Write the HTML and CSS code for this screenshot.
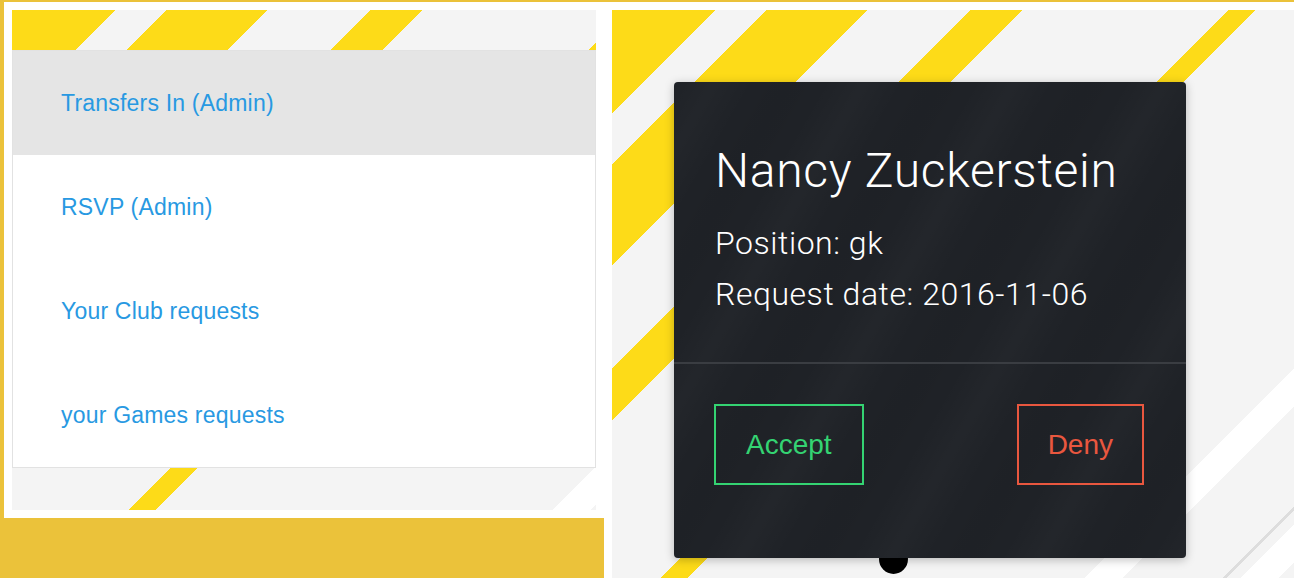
FILE: index.html
```html
<!DOCTYPE html>
<html lang="en">
<head>
<meta charset="utf-8">
<title>Requests</title>
<link rel="stylesheet" href="styles.css">
</head>
<body>
<div class="page">
  <div class="left-frame">
    <div class="stripes left-panel">
      <ul class="menu">
        <li class="menu-item active"><a href="#">Transfers In (Admin)</a></li>
        <li class="menu-item"><a href="#">RSVP (Admin)</a></li>
        <li class="menu-item"><a href="#">Your Club requests</a></li>
        <li class="menu-item"><a href="#">your Games requests</a></li>
      </ul>
    </div>
  </div>
  <div class="right-frame">
    <div class="stripes right-panel">
      <div class="blob"></div>
      <div class="card">
        <div class="card-body">
          <h2 class="name">Nancy Zuckerstein</h2>
          <p class="meta">Position: gk</p>
          <p class="meta">Request date: 2016-11-06</p>
        </div>
        <div class="card-actions">
          <button class="btn btn-accept">Accept</button>
          <button class="btn btn-deny">Deny</button>
        </div>
      </div>
    </div>
  </div>
</div>
</body>
</html>
```
FILE: styles.css
```css
html, body {
  margin: 0;
  padding: 0;
  height: 578px;
  overflow: hidden;
}
body {
  background: #ebc23a;
  font-family: "Liberation Sans", Arial, sans-serif;
}
.page {
  display: flex;
  align-items: flex-start;
  height: 578px;
  box-sizing: border-box;
  padding: 2px 0 0 4px;
}
.left-frame {
  width: 600px;
  height: 516px;
  box-sizing: border-box;
  padding: 8px;
  background: #fff;
}
.right-frame {
  flex: 1;
  align-self: stretch;
  background: #fff;
  padding: 8px 0 0 8px;
}
.stripes {
  background-color: #f4f4f4;
  background-image: linear-gradient(135deg,
    #fddb18 0px, #fddb18 73.5px,
    #f4f4f4 73.5px, #f4f4f4 109.6px,
    #fddb18 109.6px, #fddb18 181px,
    #f4f4f4 181px, #f4f4f4 253.8px,
    #fddb18 253.8px, #fddb18 290.6px,
    #f4f4f4 290.6px, #f4f4f4 435.6px,
    #fddb18 435.6px, #fddb18 454.7px,
    #f4f4f4 454.7px, #f4f4f4 735.4px,
    #ffffff 735.4px, #ffffff 762.3px,
    #f4f4f4 762.3px, #f4f4f4 833px,
    #dddddd 833px, #dddddd 836.5px,
    #f4f4f4 836.5px, #f4f4f4 846px,
    #ffffff 846px, #ffffff 873px,
    #f4f4f4 873px);
  background-size: 1300px 1300px;
  background-repeat: no-repeat;
}
.left-panel {
  height: 500px;
  box-sizing: border-box;
  padding-top: 40px;
}
.menu {
  list-style: none;
  margin: 0;
  padding: 0;
  background: #fff;
  border: 1px solid #e2e2e2;
}
.menu-item {
  padding: 40px 48px;
  line-height: 24px;
  font-size: 23px;
  letter-spacing: 0.2px;
}
.menu-item.active {
  background: #e5e5e5;
}
.menu-item a {
  color: #2899e2;
  text-decoration: none;
}
.right-panel {
  position: relative;
  height: 100%;
  box-sizing: border-box;
  padding: 72px 0 0 62px;
}
.blob {
  position: absolute;
  left: 267px;
  top: 534px;
  width: 29px;
  height: 30px;
  border-radius: 50%;
  background: #000;
}
.card {
  position: relative;
  width: 512px;
  border-radius: 4px;
  background-color: #1f2227;
  background-image: repeating-linear-gradient(120deg,
    rgba(255,255,255,0) 0px,
    rgba(255,255,255,0.018) 35px,
    rgba(255,255,255,0) 70px,
    rgba(0,0,0,0.03) 100px,
    rgba(255,255,255,0) 130px);
  box-shadow: 0 2px 10px rgba(0,0,0,0.25);
  color: #fff;
}
.card-body {
  padding: 61px 41px 42px;
  border-bottom: 2px solid #3a3d42;
}
.name {
  margin: 0 0 19px;
  font-family: Roboto, "Liberation Sans", sans-serif;
  font-weight: 300;
  font-size: 48px;
  letter-spacing: 0.7px;
  line-height: 56px;
}
.meta {
  margin: 0;
  font-family: Roboto, "Liberation Sans", sans-serif;
  font-weight: 300;
  font-size: 32px;
  letter-spacing: 0.55px;
  line-height: 51px;
}
.card-actions {
  display: flex;
  justify-content: space-between;
  padding: 40px 42px 73px 40px;
}
.btn {
  background: transparent;
  font-family: "Liberation Sans", Arial, sans-serif;
  font-size: 28px;
  line-height: 33px;
  padding: 22px 30px;
  height: 81px;
  border: 2px solid;
  border-radius: 0;
  cursor: pointer;
}
.btn-accept {
  color: #34d372;
  border-color: #34d372;
}
.btn-deny {
  color: #e9573f;
  border-color: #e9573f;
  padding: 22px 29px;
}
```
